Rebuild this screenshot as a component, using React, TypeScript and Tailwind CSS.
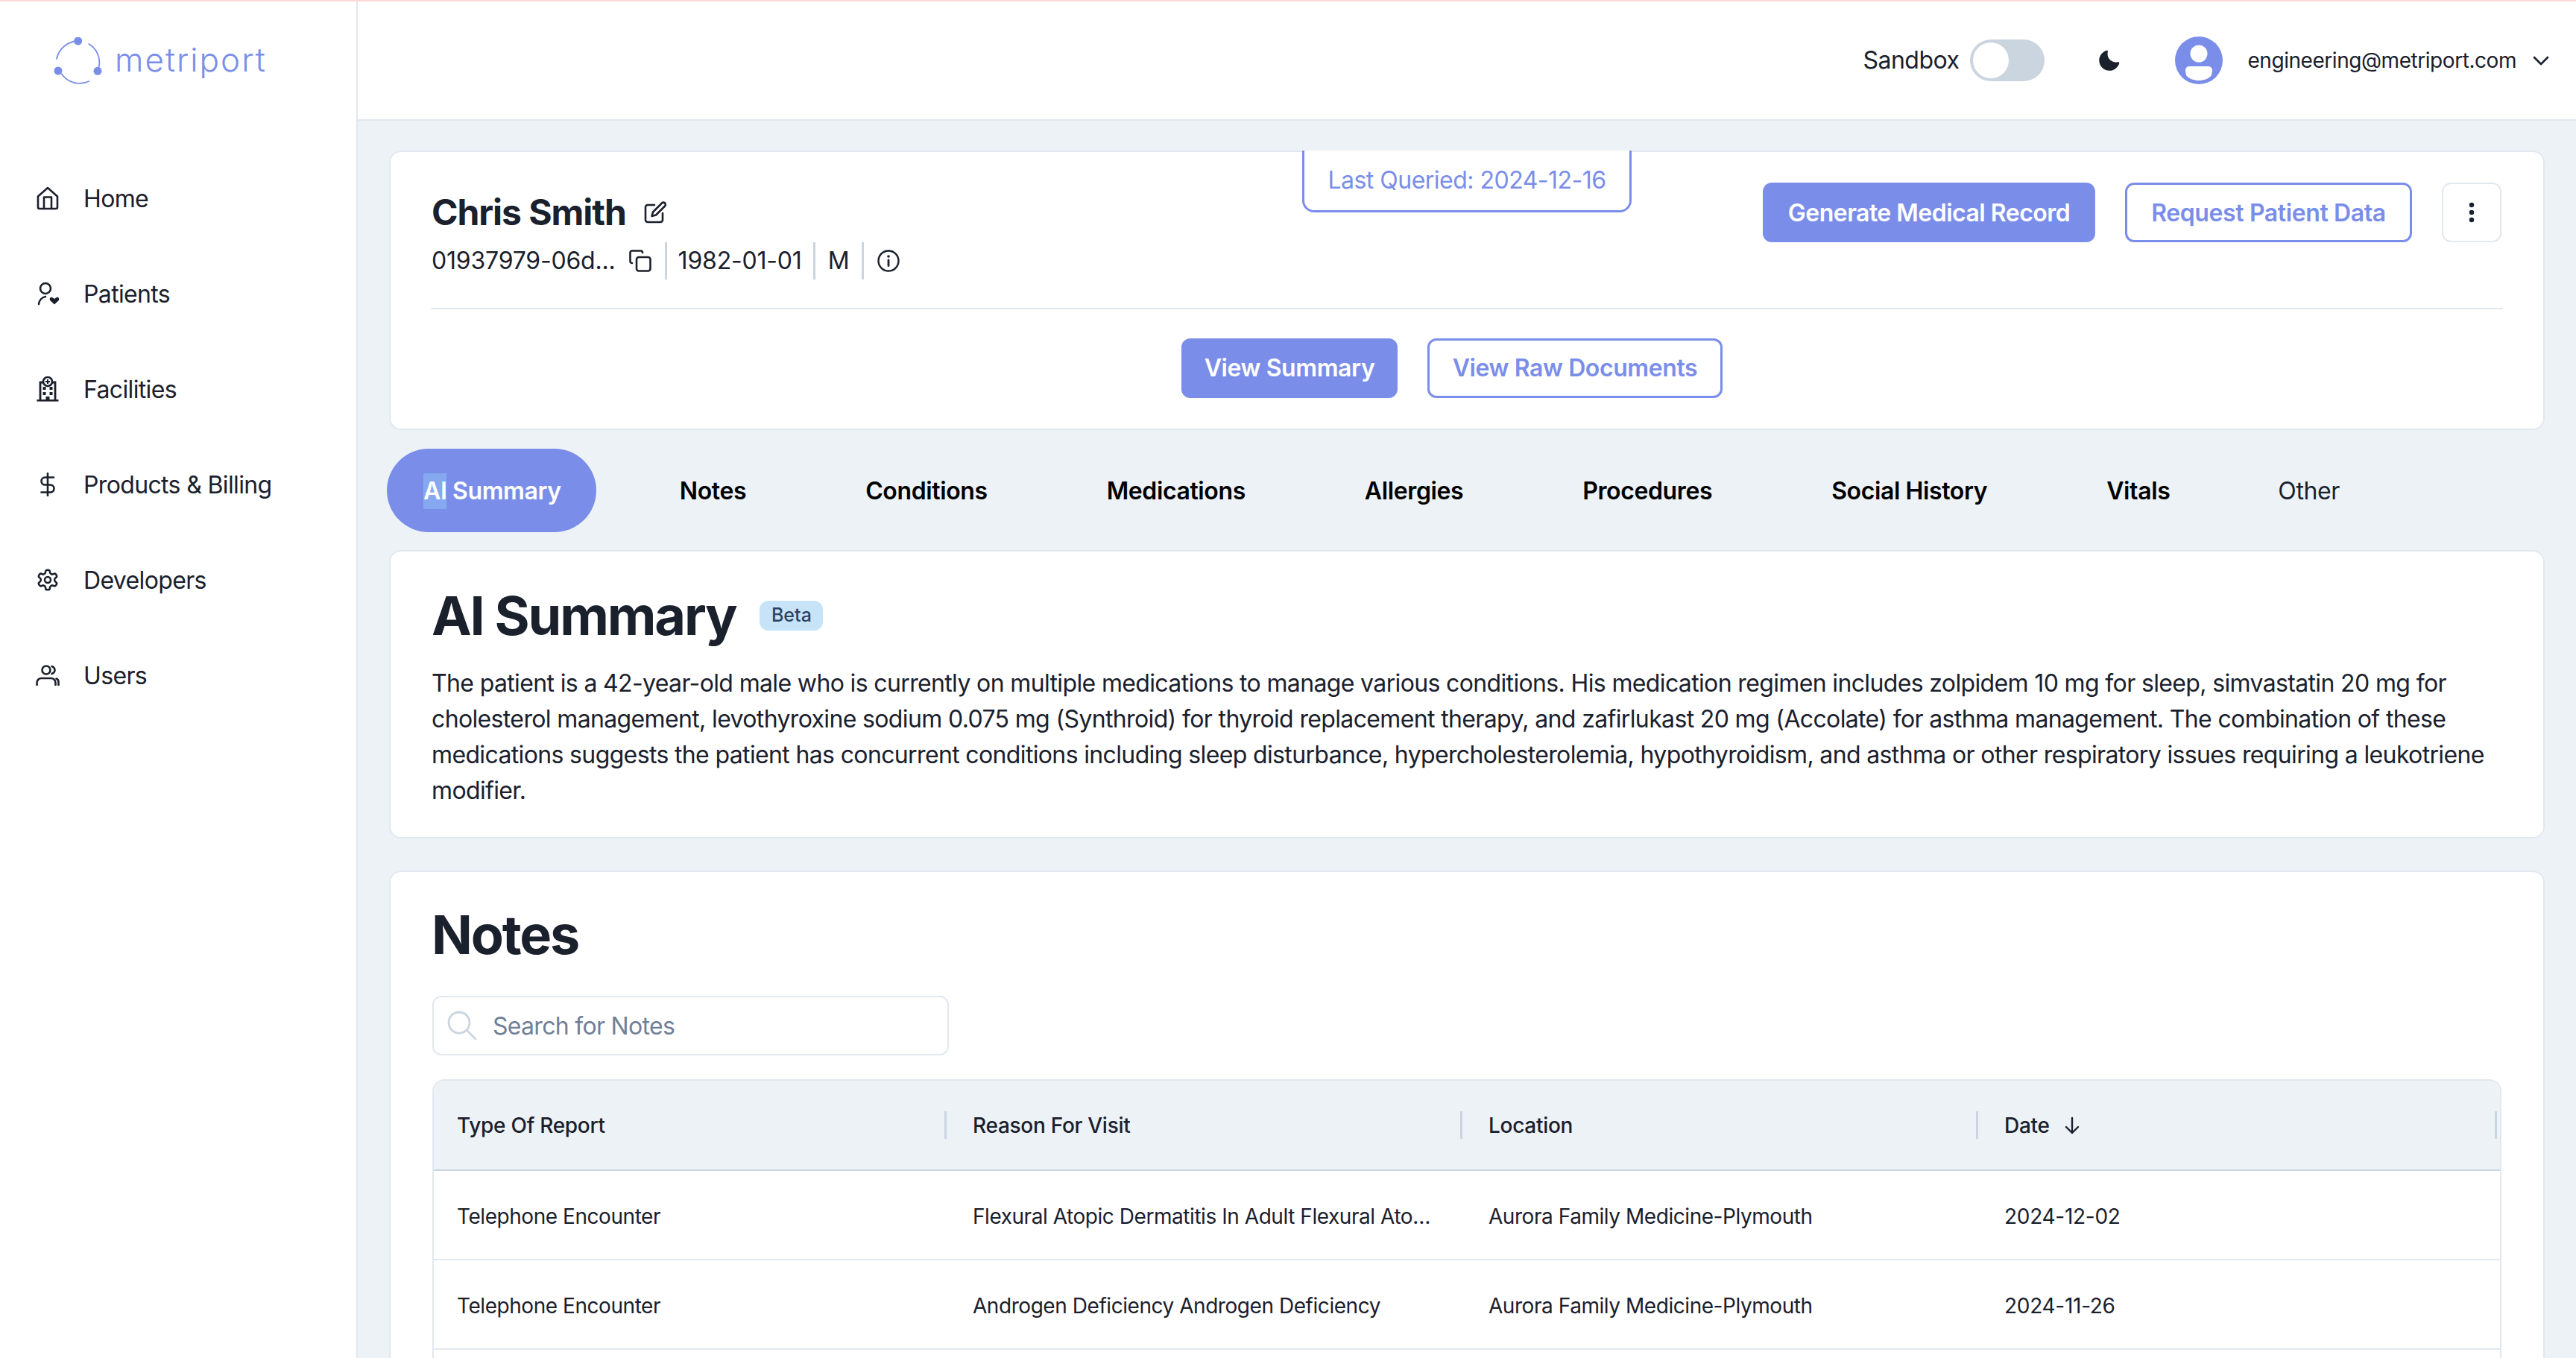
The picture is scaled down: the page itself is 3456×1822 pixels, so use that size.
import * as React from 'react'

function HomeIcon() {
	return (
		<svg width="30" height="32" viewBox="0 0 30 32" fill="none" stroke="#1a202c" strokeWidth="2.6" strokeLinejoin="round" strokeLinecap="round">
			<path d="M2 13.5 15 2l13 11.5v14.5a2 2 0 0 1-2 2H4a2 2 0 0 1-2-2z" />
			<path d="M10 30V14.5h10V30" />
		</svg>
	)
}

function PatientIcon() {
	return (
		<svg width="30" height="32" viewBox="0 0 30 32" fill="none" stroke="#1a202c" strokeWidth="2.6" strokeLinecap="round">
			<circle cx="12" cy="9" r="7" />
			<path d="M3 30c.5-5 4-9 9-10" />
			<path d="M24 30.5l-5.6-5.2c-2.2-2.3.9-6 3.5-3.7l2.1 1.5 2.1-1.5c2.6-2.3 5.7 1.4 3.5 3.7z" fill="#1a202c" stroke="none" />
		</svg>
	)
}

function FacilityIcon() {
	return (
		<svg width="30" height="34" viewBox="0 0 30 34" fill="none">
			<path d="M5 32V8h6M25 32V8h-6" stroke="#1a202c" strokeWidth="2.8" />
			<path d="M0.500 31h29v2.600h-29z" fill="#1a202c" />
			<circle cx="15" cy="7" r="6" stroke="#1a202c" strokeWidth="2.6" fill="#fff" />
			<path d="M15 4v6M12 7h6" stroke="#1a202c" strokeWidth="2" />
			<path d="M8.500 14h4v4h-4zM17.500 14h4v4h-4zM8.500 21h4v4h-4zM17.500 21h4v4h-4zM12.500 27h5v5h-5z" fill="#1a202c" />
		</svg>
	)
}

function DollarIcon() {
	return (
		<svg width="20" height="32" viewBox="0 0 20 32" fill="none" stroke="#1a202c" strokeWidth="2.6" strokeLinecap="round">
			<path d="M10 1v30" />
			<path d="M18 6.500H6.500a5 5 0 0 0 0 10h7a5 5 0 0 1 0 10H1.500" />
		</svg>
	)
}

function GearIcon() {
	return (
		<svg width="32" height="32" viewBox="0 0 24 24" fill="none" stroke="#1a202c" strokeWidth="1.900" strokeLinecap="round" strokeLinejoin="round">
			<path d="M12.220 2h-.44a2 2 0 0 0-2 2v.18a2 2 0 0 1-1 1.730l-.43.25a2 2 0 0 1-2 0l-.15-.08a2 2 0 0 0-2.730.73l-.22.38a2 2 0 0 0 .73 2.730l.15.1a2 2 0 0 1 1 1.720v.51a2 2 0 0 1-1 1.740l-.15.09a2 2 0 0 0-.73 2.730l.22.38a2 2 0 0 0 2.730.73l.15-.08a2 2 0 0 1 2 0l.43.25a2 2 0 0 1 1 1.730V20a2 2 0 0 0 2 2h.44a2 2 0 0 0 2-2v-.18a2 2 0 0 1 1-1.730l.43-.25a2 2 0 0 1 2 0l.15.08a2 2 0 0 0 2.730-.73l.22-.39a2 2 0 0 0-.73-2.730l-.15-.08a2 2 0 0 1-1-1.740v-.5a2 2 0 0 1 1-1.740l.15-.09a2 2 0 0 0 .73-2.730l-.22-.38a2 2 0 0 0-2.730-.73l-.15.08a2 2 0 0 1-2 0l-.43-.25a2 2 0 0 1-1-1.730V4a2 2 0 0 0-2-2z" />
			<circle cx="12" cy="12" r="3" />
		</svg>
	)
}

function UsersIcon() {
	return (
		<svg width="32" height="28" viewBox="0 0 32 28" fill="none" stroke="#1a202c" strokeWidth="2.6" strokeLinecap="round">
			<circle cx="14" cy="7" r="5.500" />
			<path d="M1.500 27v-3a6 6 0 0 1 6-6h13a6 6 0 0 1 6 6v3" />
			<path d="M21.500 2c2.800 1 4 3 4 5s-1.200 4-4 5" />
			<path d="M27.500 18.500c2 .6 3 2.500 3 4.500v4" />
		</svg>
	)
}

function Logo() {
	return (
		<svg width="72" height="72" viewBox="0 0 72 72" fill="none" stroke="#7a8ee9" strokeWidth="1.800" strokeLinecap="round">
			<path d="M34.700 5A30 30 0 0 0 6 29" />
			<path d="M49.300 9A29 29 0 0 1 62.700 40" />
			<path d="M12.700 49.300A29 29 0 0 0 49.300 59" />
			<circle cx="34.700" cy="5" r="5.500" fill="#7a8ee9" stroke="none" />
			<circle cx="8" cy="45" r="5.500" fill="#7a8ee9" stroke="none" />
			<circle cx="61" cy="45.300" r="5.500" fill="#7a8ee9" stroke="none" />
		</svg>
	)
}

const navItems = [
	{ label: 'Home', icon: <HomeIcon /> },
	{ label: 'Patients', icon: <PatientIcon /> },
	{ label: 'Facilities', icon: <FacilityIcon /> },
	{ label: 'Products & Billing', icon: <DollarIcon /> },
	{ label: 'Developers', icon: <GearIcon /> },
	{ label: 'Users', icon: <UsersIcon /> },
]

function Sidebar() {
	return (
		<aside className="w-[480px] shrink-0 border-r-[2px] border-[#e2e8f0] bg-white">
			<div className="flex h-[200px] items-start pl-[70px] pt-[48px]">
				<Logo />
				<span className="ml-[12px] mt-[2px] text-[44px] font-light leading-[56px] tracking-[2px] text-[#7a8ee9]">
					metriport
				</span>
			</div>
			<nav>
				{navItems.map((item) => (
					<div key={item.label} className="flex h-[128px] items-center pl-[48px]">
						<span className="flex w-[32px] justify-center">{item.icon}</span>
						<span className="ml-[32px] pt-[2px] text-[32px] tracking-[-0.02em] text-[#1a202c]">{item.label}</span>
					</div>
				))}
			</nav>
		</aside>
	)
}

function TopBar() {
	return (
		<header className="flex h-[160px] shrink-0 items-center justify-end border-b-[2px] border-[#e2e8f0] bg-white pr-[36px]">
			<span className="text-[32px] tracking-[-0.016em] text-[#1a202c]">Sandbox</span>
			<div className="ml-[15px] flex h-[56px] w-[100px] items-center rounded-full bg-[#cbd5e0] p-[4px]">
				<div className="size-[48px] rounded-full bg-white" />
			</div>
			<svg className="ml-[72px]" width="30" height="30" viewBox="0 0 24 24" fill="#1a202c">
				<path d="M21.400 13.700C20.600 13.900 19.800 14 19 14c-5 0-9-4-9-9 0-.8.1-1.600.3-2.400.1-.3 0-.7-.3-1-.3-.3-.6-.4-1-.3C4.300 2.700 1 7.100 1 12c0 6.100 4.900 11 11 11 4.900 0 9.300-3.300 10.600-8.100.1-.3 0-.7-.3-1-.2-.2-.6-.3-.9-.2z" />
			</svg>
			<svg className="ml-[73px]" width="64" height="64" viewBox="0 0 64 64">
				<circle cx="32" cy="32" r="32" fill="#7a8ee9" />
				<circle cx="32" cy="23" r="11.500" fill="#fff" />
				<path d="M14 46c0-4 2-6 6-6h24c4 0 6 2 6 6l-1 6c-4 5-11 7-17 7s-13-2-17-7z" fill="#fff" />
			</svg>
			<span className="ml-[33px] text-[28px] tracking-[-0.016em] text-[#1a202c]">engineering@metriport.com</span>
			<svg className="ml-[22px]" width="22" height="14" viewBox="0 0 22 14" fill="none" stroke="#1a202c" strokeWidth="2.600" strokeLinecap="round" strokeLinejoin="round">
				<path d="M2 3l9 9 9-9" />
			</svg>
		</header>
	)
}

function PatientCard() {
	return (
		<section className="relative mx-[42px] mt-[40px] h-[375px] shrink-0 rounded-[16px] border-[2px] border-[#e2e8f0] bg-white px-[54px] pt-[41px]">
			<div className="absolute left-1/2 top-[-2px] flex h-[83px] w-[442px] -translate-x-1/2 items-center justify-center rounded-b-[16px] border-[3px] border-t-0 border-[#7a8ee9] bg-white text-[32px] tracking-[-0.016em] text-[#7a8ee9]">
				Last Queried: 2024-12-16
			</div>
			<div className="flex items-start justify-between border-b-[2px] border-[#e2e8f0] pb-[38px]">
				<div className="pl-[1px] pt-[16px]">
					<div className="flex h-[48px] items-center">
						<h1 className="text-[48px] font-bold leading-[48px] tracking-[-0.022em] text-[#1a202c]">Chris Smith</h1>
						<svg className="ml-[24px]" width="30" height="30" viewBox="0 0 30 30" fill="none" stroke="#1a202c" strokeWidth="2.600" strokeLinecap="round" strokeLinejoin="round">
							<path d="M14 5H5a3 3 0 0 0-3 3v17a3 3 0 0 0 3 3h17a3 3 0 0 0 3-3v-9" />
							<path d="M24 2.500a2.800 2.800 0 0 1 4 4L16 18.500l-5.500 1.500 1.500-5.500z" />
						</svg>
					</div>
					<div className="mt-[16px] flex h-[50px] items-center text-[32px] tracking-[-0.006em] text-[#1a202c]">
						<span>01937979-06d...</span>
						<svg className="ml-[18px]" width="30" height="30" viewBox="0 0 30 30" fill="none" stroke="#1a202c" strokeWidth="2.600" strokeLinecap="round" strokeLinejoin="round">
							<path d="M4 18c-1.500 0-2.500-1-2.500-2.500V4C1.500 2.500 2.500 1.500 4 1.500h11.500c1.500 0 2.500 1 2.500 2.500" />
							<rect x="10" y="10" width="18.500" height="18.500" rx="3" />
						</svg>
						<div className="ml-[18px] h-[50px] w-[3px] bg-[#cbd5e0]" />
						<span className="ml-[15px]">1982-01-01</span>
						<div className="ml-[15px] h-[50px] w-[3px] bg-[#cbd5e0]" />
						<span className="ml-[17px]">M</span>
						<div className="ml-[17px] h-[50px] w-[3px] bg-[#cbd5e0]" />
						<svg className="ml-[18px]" width="30" height="30" viewBox="0 0 30 30" fill="none" stroke="#1a202c" strokeWidth="2.400" strokeLinecap="round">
							<circle cx="15" cy="15" r="13.500" />
							<path d="M15 14v7.500" strokeWidth="2.800" />
							<circle cx="15" cy="9" r="1.800" fill="#1a202c" stroke="none" />
						</svg>
					</div>
				</div>
				<div className="flex items-center gap-[40px] pr-[2px]">
					<button className="flex h-[80px] w-[446px] items-center justify-center rounded-[12px] bg-[#7a8ee9] pt-[1px] text-[32px] font-semibold tracking-[-0.016em] text-white">
						Generate Medical Record
					</button>
					<button className="flex h-[80px] w-[385px] items-center justify-center rounded-[12px] border-[3px] border-[#7a8ee9] bg-white pt-[1px] text-[32px] font-semibold tracking-[-0.012em] text-[#7a8ee9]">
						Request Patient Data
					</button>
					<button className="flex h-[80px] w-[80px] items-center justify-center rounded-[12px] border-[2px] border-[#e2e8f0] bg-white">
						<svg width="8" height="28" viewBox="0 0 8 28" fill="#1a202c">
							<circle cx="4" cy="4" r="3.200" />
							<circle cx="4" cy="14" r="3.200" />
							<circle cx="4" cy="24" r="3.200" />
						</svg>
					</button>
				</div>
			</div>
			<div className="flex justify-center pt-[39px]">
				<div className="mr-[40px] flex gap-[40px] tracking-[-0.025em]">
					<button className="flex h-[80px] w-[290px] items-center justify-center rounded-[12px] bg-[#7a8ee9] text-[32px] font-semibold text-white">
						View Summary
					</button>
					<button className="flex h-[80px] w-[396px] items-center justify-center rounded-[12px] border-[3px] border-[#7a8ee9] bg-white text-[32px] font-semibold text-[#7a8ee9]">
						View Raw Documents
					</button>
				</div>
			</div>
		</section>
	)
}

const tabs = ['Notes', 'Conditions', 'Medications', 'Allergies', 'Procedures', 'Social History', 'Vitals']

function Tabs() {
	return (
		<div className="ml-[39px] mt-[25px] flex h-[112px] shrink-0 items-center gap-[64px] text-[32px] tracking-[-0.012em]">
			<div className="flex h-[112px] items-center rounded-full bg-[#7a8ee9] pl-[49px] pr-[47px] pt-[2px] font-semibold text-white">
				<span className="inline-block bg-[#86a8f0] leading-[48px]">AI</span>
				<span className="whitespace-pre"> Summary</span>
			</div>
			{tabs.map((tab) => (
				<div key={tab} className="px-[48px] pt-[2px] font-semibold text-black">
					{tab}
				</div>
			))}
			<div className="px-[33px] pt-[2px] text-[#1a202c]">Other</div>
		</div>
	)
}

function SummaryCard() {
	return (
		<section className="mx-[42px] mt-[24px] h-[387px] shrink-0 rounded-[16px] border-[2px] border-[#e2e8f0] bg-white px-[55px] pt-[38px]">
			<div className="flex h-[96px] items-center">
				<h2 className="text-[72px] font-bold leading-[96px] tracking-[-0.03em] text-[#1a202c]">AI Summary</h2>
				<span className="ml-[32px] flex h-[40px] w-[85px] items-center justify-center rounded-[12px] bg-[#c6e3f8] text-[25px] font-medium text-[#2a4365]">
					Beta
				</span>
			</div>
			<p className="mt-[19px] text-[32px] leading-[48px] tracking-[-0.02em] text-[#1a202c]">
				The patient is a 42-year-old male who is currently on multiple medications to manage various conditions. His medication regimen includes zolpidem 10 mg for sleep, simvastatin 20 mg for cholesterol management, levothyroxine sodium 0.075 mg (Synthroid) for thyroid replacement therapy, and zafirlukast 20 mg (Accolate) for asthma management. The combination of these medications suggests the patient has concurrent conditions including sleep disturbance, hypercholesterolemia, hypothyroidism, and asthma or other respiratory issues requiring a leukotriene modifier.
			</p>
		</section>
	)
}

const rows = [
	{
		type: 'Telephone Encounter',
		reason: 'Flexural Atopic Dermatitis In Adult Flexural Atopic Dermatitis In Adult',
		location: 'Aurora Family Medicine-Plymouth',
		date: '2024-12-02',
	},
	{
		type: 'Telephone Encounter',
		reason: 'Androgen Deficiency Androgen Deficiency',
		location: 'Aurora Family Medicine-Plymouth',
		date: '2024-11-26',
	},
	{ type: '', reason: '', location: '', date: '' },
]

function HeaderCell({ label, sorted }: { label: string; sorted?: boolean }) {
	return (
		<div className="relative flex h-full items-center pl-[31px] pr-[32px] font-medium tracking-[-0.01em] text-[#1a202c]">
			<span>{label}</span>
			{sorted && (
				<svg className="ml-[18px]" width="24" height="26" viewBox="0 0 24 26" fill="none" stroke="#1a202c" strokeWidth="2.400" strokeLinecap="round" strokeLinejoin="round">
					<path d="M12 3v20M4 15l8 8 8-8" />
				</svg>
			)}
			<div className="absolute right-[4px] top-[41px] h-[37px] w-[3px] bg-[#cbd5e0]" />
		</div>
	)
}

function NotesCard() {
	return (
		<section className="mx-[42px] mt-[43px] grow rounded-t-[16px] border-x-[2px] border-t-[2px] border-[#e2e8f0] bg-white px-[56px] pt-[36px]">
			<h2 className="ml-[-1px] text-[72px] font-bold leading-[96px] tracking-[-0.03em] text-[#1a202c]">Notes</h2>
			<div className="mt-[34px] flex h-[80px] w-[693px] items-center rounded-[12px] border-[2px] border-[#e2e8f0] pl-[18px]">
				<svg width="40" height="40" viewBox="0 0 40 40" fill="none" stroke="#cbd5e0" strokeWidth="2.800" strokeLinecap="round">
					<circle cx="16" cy="16" r="14" />
					<path d="M26.500 26.500 38 38" />
				</svg>
				<span className="ml-[21px] pt-[2px] text-[32px] tracking-[-0.022em] text-[#718096]">Search for Notes</span>
			</div>
			<div className="mt-[32px] overflow-hidden rounded-t-[16px] border-x-[2px] border-t-[2px] border-[#e2e8f0] text-[28px] tracking-[-0.016em] text-[#1a202c]">
				<div className="grid h-[121px] grid-cols-[692px_692px_692px_1fr] border-b-[2px] border-[#cbd5e0] bg-[#edf2f7]">
					<HeaderCell label="Type Of Report" />
					<HeaderCell label="Reason For Visit" />
					<HeaderCell label="Location" />
					<HeaderCell label="Date" sorted />
				</div>
				{rows.map((row, i) => (
					<div key={i} className="grid h-[120px] grid-cols-[692px_692px_692px_1fr] items-center border-b-[2px] border-[#e2e8f0] pt-[3px]">
						<div className="truncate pl-[31px] pr-[32px]">{row.type}</div>
						<div className="truncate pl-[31px] pr-[32px]">{row.reason}</div>
						<div className="truncate pl-[31px] pr-[32px]">{row.location}</div>
						<div className="truncate pl-[31px] pr-[32px] tracking-[-0.01em]">{row.date}</div>
					</div>
				))}
			</div>
		</section>
	)
}

export default function App() {
	return (
		<div className="flex h-[1822px] w-full flex-col overflow-hidden bg-white font-['Inter',sans-serif]">
			<div className="h-[2px] shrink-0 bg-[#fed7d7]" />
			<div className="flex min-h-0 grow">
				<Sidebar />
				<main className="flex min-w-0 grow flex-col bg-[#edf2f7]">
					<TopBar />
					<PatientCard />
					<Tabs />
					<SummaryCard />
					<NotesCard />
				</main>
			</div>
		</div>
	)
}
